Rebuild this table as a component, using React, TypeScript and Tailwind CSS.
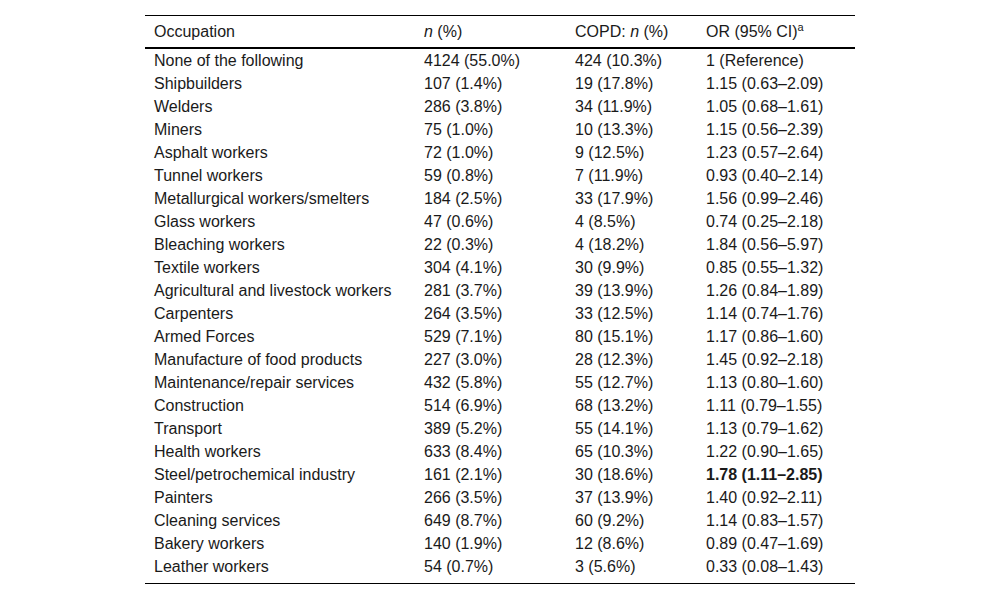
import React from "react";

const rows: [string, string, string, string, boolean?][] = [
  ["None of the following", "4124 (55.0%)", "424 (10.3%)", "1 (Reference)"],
  ["Shipbuilders", "107 (1.4%)", "19 (17.8%)", "1.15 (0.63–2.09)"],
  ["Welders", "286 (3.8%)", "34 (11.9%)", "1.05 (0.68–1.61)"],
  ["Miners", "75 (1.0%)", "10 (13.3%)", "1.15 (0.56–2.39)"],
  ["Asphalt workers", "72 (1.0%)", "9 (12.5%)", "1.23 (0.57–2.64)"],
  ["Tunnel workers", "59 (0.8%)", "7 (11.9%)", "0.93 (0.40–2.14)"],
  ["Metallurgical workers/smelters", "184 (2.5%)", "33 (17.9%)", "1.56 (0.99–2.46)"],
  ["Glass workers", "47 (0.6%)", "4 (8.5%)", "0.74 (0.25–2.18)"],
  ["Bleaching workers", "22 (0.3%)", "4 (18.2%)", "1.84 (0.56–5.97)"],
  ["Textile workers", "304 (4.1%)", "30 (9.9%)", "0.85 (0.55–1.32)"],
  ["Agricultural and livestock workers", "281 (3.7%)", "39 (13.9%)", "1.26 (0.84–1.89)"],
  ["Carpenters", "264 (3.5%)", "33 (12.5%)", "1.14 (0.74–1.76)"],
  ["Armed Forces", "529 (7.1%)", "80 (15.1%)", "1.17 (0.86–1.60)"],
  ["Manufacture of food products", "227 (3.0%)", "28 (12.3%)", "1.45 (0.92–2.18)"],
  ["Maintenance/repair services", "432 (5.8%)", "55 (12.7%)", "1.13 (0.80–1.60)"],
  ["Construction", "514 (6.9%)", "68 (13.2%)", "1.11 (0.79–1.55)"],
  ["Transport", "389 (5.2%)", "55 (14.1%)", "1.13 (0.79–1.62)"],
  ["Health workers", "633 (8.4%)", "65 (10.3%)", "1.22 (0.90–1.65)"],
  ["Steel/petrochemical industry", "161 (2.1%)", "30 (18.6%)", "1.78 (1.11–2.85)", true],
  ["Painters", "266 (3.5%)", "37 (13.9%)", "1.40 (0.92–2.11)"],
  ["Cleaning services", "649 (8.7%)", "60 (9.2%)", "1.14 (0.83–1.57)"],
  ["Bakery workers", "140 (1.9%)", "12 (8.6%)", "0.89 (0.47–1.69)"],
  ["Leather workers", "54 (0.7%)", "3 (5.6%)", "0.33 (0.08–1.43)"],
];

const grid = "grid grid-cols-[270px_151px_131px_158px]";

export default function App() {
  return (
    <div
      className="w-[1000px] h-[599px] bg-white text-[#1a1a1a] text-[16px]"
      style={{ fontFamily: '"Liberation Sans", Arial, sans-serif' }}
    >
      <div className="pt-[15px] pl-[145px]">
        <div className="w-[710px] border-t border-black border-b pb-[5px]">
          <div className={`${grid} h-[33px] items-center border-b-2 border-black`}>
            <div className="pl-[9px]">Occupation</div>
            <div className="pl-[9px]">
              <i>n</i> (%)
            </div>
            <div className="pl-[9px]">
              COPD: <i>n</i> (%)
            </div>
            <div className="pl-[9px]">
              OR (95% CI)<sup className="text-[11px]">a</sup>
            </div>
          </div>
          <div>
            {rows.map((r, i) => (
              <div key={i} className={`${grid} h-[23px] items-center leading-[23px]`}>
                <div className="pl-[9px] whitespace-nowrap">{r[0]}</div>
                <div className="pl-[9px]">{r[1]}</div>
                <div className="pl-[9px]">{r[2]}</div>
                <div className={`pl-[9px] ${r[4] ? "font-bold" : ""}`}>{r[3]}</div>
              </div>
            ))}
          </div>
        </div>
      </div>
    </div>
  );
}
